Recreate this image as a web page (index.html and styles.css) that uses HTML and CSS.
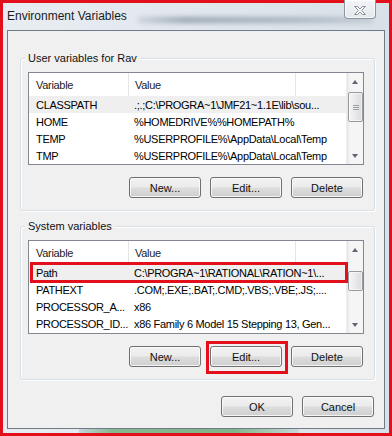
FILE: index.html
```html
<!DOCTYPE html>
<html>
<head>
<meta charset="utf-8">
<link rel="stylesheet" href="styles.css">
</head>
<body>
<div class="screen">
  <div class="window">
    <div class="titlebar">
      <span class="smudge"></span>
      <span class="title">Environment Variables</span>
      <span class="close">
        <svg width="14" height="11" viewBox="0 0 14 11"><path d="M1.5 1.5h3l2.5 2.5 2.5-2.5h3l-4 4 4 4h-3l-2.5-2.5-2.5 2.5h-3l4-4z" fill="#fbfbfb" stroke="#8a8f96" stroke-width="1" stroke-linejoin="round"/></svg>
      </span>
    </div>
    <div class="client">
      <div class="group">
        <span class="legend">User variables for Rav</span>
        <div class="list">
          <div class="cols">
            <div class="head"><span class="c1">Variable</span><span class="c2">Value</span></div>
            <div class="row sel"><span class="c1">CLASSPATH</span><span class="c2">.;.;C:\PROGRA~1\JMF21~1.1E\lib\sou...</span></div>
            <div class="row"><span class="c1">HOME</span><span class="c2">%HOMEDRIVE%%HOMEPATH%</span></div>
            <div class="row"><span class="c1">TEMP</span><span class="c2">%USERPROFILE%\AppData\Local\Temp</span></div>
            <div class="row"><span class="c1">TMP</span><span class="c2">%USERPROFILE%\AppData\Local\Temp</span></div>
          </div>
          <div class="scroll">
            <span class="arrow up"></span>
            <div class="track"><span class="thumb t-user"><i></i><i></i><i></i></span></div>
            <span class="arrow down"></span>
          </div>
        </div>
        <div class="btnrow">
          <span class="btn">New...</span><span class="btn">Edit...</span><span class="btn">Delete</span>
        </div>
      </div>
      <div class="group sys">
        <span class="legend">System variables</span>
        <div class="list tall">
          <div class="cols">
            <div class="head"><span class="c1">Variable</span><span class="c2">Value</span></div>
            <div class="row sel mark"><span class="c1">Path</span><span class="c2">C:\PROGRA~1\RATIONAL\RATION~1\...</span></div>
            <div class="row"><span class="c1">PATHEXT</span><span class="c2">.COM;.EXE;.BAT;.CMD;.VBS;.VBE;.JS;....</span></div>
            <div class="row"><span class="c1">PROCESSOR_A...</span><span class="c2">x86</span></div>
            <div class="row"><span class="c1">PROCESSOR_ID...</span><span class="c2">x86 Family 6 Model 15 Stepping 13, Gen...</span></div>
          </div>
          <div class="scroll">
            <span class="arrow up"></span>
            <div class="track"><span class="thumb t-sys"></span></div>
            <span class="arrow down"></span>
          </div>
        </div>
        <div class="btnrow">
          <span class="btn">New...</span><span class="btn mark">Edit...</span><span class="btn">Delete</span>
        </div>
      </div>
      <div class="dlgrow">
        <span class="btn">OK</span><span class="btn">Cancel</span>
      </div>
    </div>
    <div class="bottomframe"><span class="green"></span></div>
  </div>
</div>
</body>
</html>
```

FILE: styles.css
```css
html, body {
  margin: 0;
  padding: 0;
  background: #e3101b;
}
.screen {
  width: 392px;
  height: 436px;
  box-sizing: border-box;
  border: 3px solid #e3101b;
  background: #e3101b;
  font-family: "Liberation Sans", Arial, sans-serif;
  color: #000;
}
.window {
  width: 386px;
  height: 430px;
  display: flex;
  flex-direction: column;
  background: linear-gradient(90deg, #e8edf2 0%, #dfe6ec 60%, #d9e1e8 100%);
}
.titlebar {
  height: 27px;
  position: relative;
  display: flex;
  align-items: center;
  padding-left: 4px;
  flex: none;
}
.title {
  font-size: 12px;
  color: #1b1b1b;
  position: relative;
  margin-top: -1px;
}
.smudge {
  position: absolute;
  left: 135px;
  top: 14px;
  width: 235px;
  height: 6px;
  background: linear-gradient(90deg, rgba(110,125,145,0.2), rgba(95,110,130,0.55) 20%, rgba(110,125,145,0.45) 70%, rgba(120,135,150,0.25));
  filter: blur(2.5px);
}
.close {
  position: absolute;
  left: 341px;
  top: -3px;
  width: 32px;
  height: 19px;
  box-sizing: border-box;
  border: 1px solid #8d949c;
  border-top: none;
  border-radius: 0 0 4px 4px;
  background: linear-gradient(#f3f5f7, #e3e8ed);
  box-shadow: inset 0 0 0 1px rgba(255,255,255,0.7);
  display: flex;
  align-items: center;
  justify-content: center;
  padding-top: 2px;
}
.client {
  margin: 0 4px;
  height: 399px;
  box-sizing: border-box;
  border: 1px solid #6f7c88;
  background: #f0f0f0;
  padding: 27px 9px 0 12px;
  flex: none;
}
.bottomframe {
  flex: 1;
  position: relative;
}
.green {
  position: absolute;
  left: 76px;
  top: 0;
  width: 220px;
  height: 4px;
  background: linear-gradient(90deg, rgba(120,160,170,0.3), #86b890 15%, #7fb58a 70%, rgba(170,200,190,0.4));
}
.group {
  position: relative;
  border: 1px solid #d5dfe5;
  border-radius: 3px;
  box-shadow: inset 1px 1px 0 #fff, 1px 1px 0 #fff;
  padding: 13px 10px 12px 7px;
}
.group.sys {
  margin-top: 15px;
}
.legend {
  position: absolute;
  left: 4px;
  top: -8px;
  padding: 0 3px;
  background: #f0f0f0;
  font-size: 11px;
  line-height: 14px;
  color: #111;
}
.list {
  height: 93px;
  box-sizing: border-box;
  border: 1px solid #828790;
  background: #fff;
  display: flex;
  font-size: 11px;
  letter-spacing: -0.3px;
}
.list.tall {
  height: 94px;
}
.cols {
  flex: 1;
  display: flex;
  flex-direction: column;
}
.head, .row {
  display: flex;
  align-items: center;
  white-space: nowrap;
}
.head {
  height: 23px;
  color: #222;
}
.row {
  height: 17px;
  box-sizing: border-box;
  padding-top: 1px;
}
.row.sel {
  background: #efefef;
}
.c1 {
  width: 92px;
  padding-left: 7px;
  overflow: hidden;
  flex: none;
}
.head .c1 {
  border-right: 1px solid #e5e5e5;
  height: 23px;
  line-height: 24px;
}
.c2 {
  padding-left: 6px;
}
.head .c2 {
  padding-left: 6px;
  border-right: 1px solid #e5e5e5;
  flex: none;
  width: 160px;
  height: 23px;
  line-height: 24px;
}
.mark {
  position: relative;
}
.row.mark::after {
  content: "";
  position: absolute;
  left: 1px;
  right: -2px;
  top: -2px;
  bottom: -2px;
  border: 3px solid #e3101b;
}
.btn.mark::after {
  content: "";
  position: absolute;
  left: -5px;
  right: -7px;
  top: -6px;
  bottom: -8px;
  border: 3px solid #e3101b;
}
.scroll {
  width: 17px;
  flex: none;
  display: flex;
  flex-direction: column;
  background: linear-gradient(90deg, #e6e6e6, #f5f5f5 20%, #f5f5f5);
  border-left: 1px solid #ececec;
  box-sizing: border-box;
}
.arrow {
  height: 17px;
  flex: none;
  display: flex;
  align-items: center;
  justify-content: center;
}
.arrow::before {
  content: "";
  border-left: 3.5px solid transparent;
  border-right: 3.5px solid transparent;
}
.arrow.up::before {
  border-bottom: 4px solid #5f6670;
}
.arrow.down::before {
  border-top: 4px solid #5f6670;
}
.track {
  flex: 1;
  position: relative;
}
.thumb {
  position: absolute;
  left: 1px;
  right: 0;
  box-sizing: border-box;
  border: 1px solid #979ba1;
  border-radius: 2px;
  background: linear-gradient(90deg, #f5f5f5, #e9e9ea 50%, #d9dadc);
  box-shadow: inset 0 0 0 1px rgba(255,255,255,0.6);
  display: flex;
  flex-direction: column;
  align-items: center;
  justify-content: center;
  gap: 1px;
}
.thumb i {
  display: block;
  width: 6px;
  height: 1px;
  background: #9aa0a6;
}
.t-user {
  top: 2px;
  height: 30px;
}
.t-sys {
  top: 13px;
  height: 20px;
}
.btnrow {
  display: flex;
  justify-content: flex-end;
  gap: 9px;
  margin-top: 12px;
  padding-right: 1px;
}
.btn {
  width: 72px;
  height: 21px;
  box-sizing: border-box;
  border: 1px solid #707070;
  border-radius: 3px;
  background: linear-gradient(#f2f2f2 0%, #ebebeb 48%, #dddddd 52%, #cfcfcf 100%);
  box-shadow: inset 0 0 0 1px rgba(252,252,252,0.85);
  display: flex;
  align-items: center;
  justify-content: center;
  font-size: 11px;
  color: #111;
  position: relative;
}
.dlgrow {
  display: flex;
  justify-content: flex-end;
  gap: 9px;
  margin-top: 16px;
  padding-right: 1px;
}
```
